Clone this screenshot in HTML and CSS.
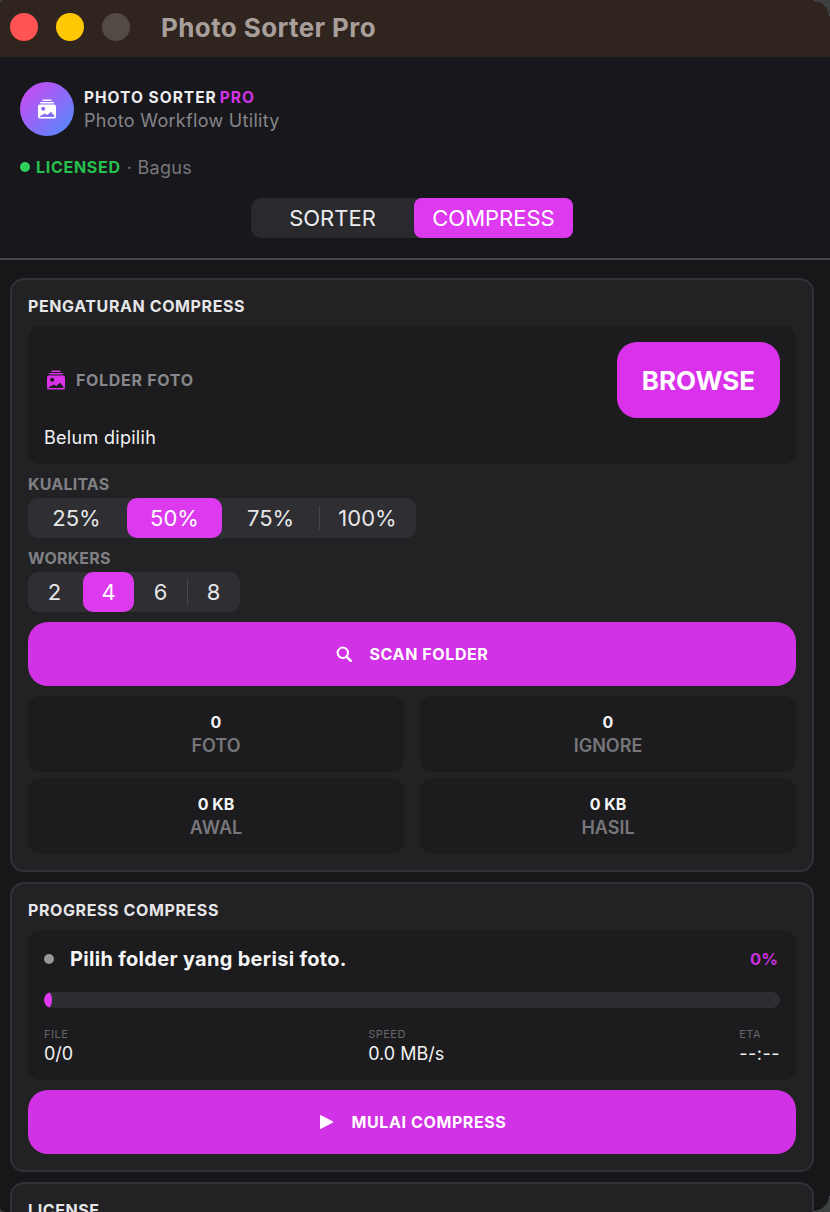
FILE: index.html
```html
<!DOCTYPE html>
<html lang="id">
<head>
    <meta charset="UTF-8">
    <title>Photo Sorter Pro</title>
    <link rel="stylesheet" href="styles.css">
</head>
<body>
<svg class="defs" width="0" height="0">
    <symbol id="album" viewBox="0 0 20 20">
        <path d="M6 .6h8a.7.7 0 0 1 0 1.4H6A.7.7 0 0 1 6 .6zM3.800 3h12.400a.8.8 0 0 1 0 1.600H3.800a.8.8 0 0 1 0-1.600z"/>
        <path fill-rule="evenodd" d="M3 5.400h14A2 2 0 0 1 19 7.400v10A2.200 2.200 0 0 1 16.800 19.600H3.200A2.200 2.200 0 0 1 1 17.400v-10A2 2 0 0 1 3 5.400zM6.200 7.800a2 2 0 1 0 0 4 2 2 0 0 0 0-4zM2.600 17.200c.1.500.4.800.9.800h13c.5 0 .9-.3.9-.8v-.7l-3.500-3.700-3.600 3.200-2.400-1.400z"/>
    </symbol>
</svg>
<div class="window">
    <div class="titlebar">
        <span class="light red"></span>
        <span class="light yellow"></span>
        <span class="light off"></span>
        <span class="window-title">Photo Sorter Pro</span>
    </div>

    <header class="top">
        <div class="brand">
            <div class="logo"><svg class="logo-icon"><use href="#album"/></svg></div>
            <div class="brand-text">
                <div class="brand-name">PHOTO SORTER<span class="pro">PRO</span></div>
                <div class="brand-sub">Photo Workflow Utility</div>
            </div>
        </div>
        <div class="license-line">
            <span class="dot-green"></span>
            <span class="licensed">LICENSED</span>
            <span class="owner">· Bagus</span>
        </div>
        <div class="tabs">
            <div class="tab">SORTER</div>
            <div class="tab active">COMPRESS</div>
        </div>
    </header>

    <main class="content">
        <section class="card">
            <h2>PENGATURAN COMPRESS</h2>
            <div class="folder">
                <div class="folder-row">
                    <svg class="folder-icon"><use href="#album"/></svg>
                    <span class="folder-label">FOLDER FOTO</span>
                    <button class="browse">BROWSE</button>
                </div>
                <div class="folder-path">Belum dipilih</div>
            </div>

            <div class="field-label">KUALITAS</div>
            <div class="segments quality">
                <div class="seg">25%</div>
                <div class="seg active">50%</div>
                <div class="seg sep">75%</div>
                <div class="seg">100%</div>
            </div>

            <div class="field-label">WORKERS</div>
            <div class="segments workers">
                <div class="seg">2</div>
                <div class="seg active">4</div>
                <div class="seg sep">6</div>
                <div class="seg">8</div>
            </div>

            <button class="action scan">
                <svg class="action-icon" viewBox="0 0 16 16"><circle cx="6.800" cy="6.800" r="5.200" fill="none" stroke="#fff" stroke-width="2"/><path d="M10.800 10.800l4 4" stroke="#fff" stroke-width="2.400" stroke-linecap="round"/></svg>
                SCAN FOLDER
            </button>

            <div class="stats">
                <div class="stat"><b>0</b><span>FOTO</span></div>
                <div class="stat"><b>0</b><span>IGNORE</span></div>
                <div class="stat"><b>0 KB</b><span>AWAL</span></div>
                <div class="stat"><b>0 KB</b><span>HASIL</span></div>
            </div>
        </section>

        <section class="card">
            <h2>PROGRESS COMPRESS</h2>
            <div class="progress-box">
                <div class="status">
                    <span class="dot-grey"></span>
                    <span class="status-text">Pilih folder yang berisi foto.</span>
                    <span class="percent">0%</span>
                </div>
                <div class="bar"><div class="bar-fill"></div></div>
                <div class="meta">
                    <div class="meta-col"><small>FILE</small><span>0/0</span></div>
                    <div class="meta-col"><small>SPEED</small><span>0.0 MB/s</span></div>
                    <div class="meta-col eta"><small>ETA</small><span>--:--</span></div>
                </div>
            </div>
            <button class="action start">
                <svg class="action-icon" viewBox="0 0 16 16"><path d="M2.500 1.500v13L15 8z" fill="#fff" stroke="#fff" stroke-linejoin="round"/></svg>
                MULAI COMPRESS
            </button>
        </section>

        <section class="card">
            <h2>LICENSE</h2>
        </section>
    </main>
</div>
</body>
</html>
```

FILE: styles.css
```css
html, body {
    margin: 0;
    padding: 0;
    height: 1212px;
    overflow: hidden;
    background-color: #3c4240;
    font-family: Inter, "Liberation Sans", sans-serif;
}
.defs {
    position: absolute;
}
.window {
    position: relative;
    height: 1212px;
    border-radius: 5px 16px 16px 5px;
    overflow: hidden;
    background-color: #17171a;
}
/* thin edge of the window, only visible round the right corners */
.window::before,
.window::after {
    content: "";
    position: absolute;
    right: 0;
    width: 15px;
    height: 15px;
    border-right: 1px solid #56565a;
}
.window::before {
    top: 0;
    border-top: 1px solid #56565a;
    border-top-right-radius: 16px;
}
.window::after {
    bottom: 0;
    border-bottom: 1px solid #56565a;
    border-bottom-right-radius: 16px;
}

.titlebar {
    height: 57px;
    display: flex;
    align-items: center;
    padding: 0 0 3px 10px;
    box-sizing: border-box;
    background-color: #30241f;
}
.light {
    width: 28px;
    height: 28px;
    border-radius: 50%;
    margin-right: 18px;
}
.red { background-color: #ff5253; }
.yellow { background-color: #fec804; }
.off { background-color: #544a45; }
.window-title {
    margin-left: 13px;
    font-size: 26px;
    font-weight: 700;
    letter-spacing: 0.4px;
    color: #a89f9b;
}

.top {
    height: 203px;
    box-sizing: border-box;
    padding: 25px 26px 0 20px;
    background-color: #18181c;
    border-bottom: 2px solid #46464a;
}
.brand {
    display: flex;
    align-items: center;
    gap: 10px;
}
.logo {
    width: 54px;
    height: 54px;
    border-radius: 50%;
    background: linear-gradient(135deg, #d545f2, #4c8dfd);
    display: flex;
    align-items: center;
    justify-content: center;
}
.logo-icon {
    width: 20px;
    height: 20px;
    fill: #fff;
}
.brand-text {
    margin-top: 4px;
}
.brand-name {
    font-size: 15.500px;
    font-weight: 700;
    letter-spacing: 1px;
    color: #ececee;
    line-height: 20px;
}
.pro {
    color: #d433e8;
    margin-left: 3px;
}
.brand-sub {
    font-size: 18px;
    letter-spacing: 0.3px;
    color: #85858a;
    line-height: 26px;
}
.license-line {
    display: flex;
    align-items: center;
    margin-top: 19px;
    height: 24px;
}
.dot-green {
    width: 10px;
    height: 10px;
    border-radius: 50%;
    background-color: #2fd15a;
    margin-right: 6px;
}
.licensed {
    font-size: 16px;
    font-weight: 700;
    letter-spacing: 0.7px;
    color: #27c04f;
}
.owner {
    margin-left: 6px;
    font-size: 18px;
    letter-spacing: 0.3px;
    color: #77777c;
}
.tabs {
    display: flex;
    width: 322px;
    height: 40px;
    margin: 19px auto 0;
    border-radius: 10px;
    background-color: #2a2a2e;
}
.tab {
    flex: 1;
    display: flex;
    align-items: center;
    justify-content: center;
    border-radius: 8px;
    font-size: 22px;
    color: #ededee;
}
.tab.active {
    flex: none;
    width: 159px;
    background-color: #dd3af0;
    color: #fff;
}

.content {
    padding: 18px 16px 0 10px;
}
.card {
    box-sizing: border-box;
    margin-bottom: 10px;
    padding: 16px;
    border: 2px solid #323236;
    border-radius: 14px;
    background-color: #222225;
}
h2 {
    margin: 0 0 10px;
    font-size: 16px;
    line-height: 20px;
    font-weight: 700;
    letter-spacing: 0.6px;
    color: #e6e6e8;
}
.folder {
    height: 138px;
    box-sizing: border-box;
    padding: 16px 16px 0;
    border-radius: 12px;
    background-color: #1c1c1e;
}
.folder-row {
    display: flex;
    align-items: center;
    height: 76px;
}
.folder-icon {
    width: 20px;
    height: 20px;
    margin: 0 10px 0 2px;
    fill: #d933ea;
}
.folder-label {
    flex: 1;
    font-size: 16px;
    font-weight: 700;
    letter-spacing: 0.7px;
    color: #87878b;
}
.browse {
    width: 163px;
    height: 76px;
    border: none;
    border-radius: 20px;
    background-color: #d932ea;
    color: #fff;
    font-family: inherit;
    font-size: 26px;
    font-weight: 700;
}
.folder-path {
    margin-top: 9px;
    font-size: 18px;
    letter-spacing: 0.3px;
    line-height: 22px;
    color: #f2f2f3;
}
.field-label {
    margin: 8px 0 2px;
    font-size: 16px;
    line-height: 24px;
    font-weight: 700;
    letter-spacing: 0.2px;
    color: #808084;
}
.segments {
    display: flex;
    height: 40px;
    border-radius: 10px;
    background-color: #2e2e33;
}
.quality { width: 388px; }
.workers { width: 212px; }
.seg {
    flex: 1;
    display: flex;
    align-items: center;
    justify-content: center;
    border-radius: 10px;
    font-size: 22px;
    color: #e6e6e8;
    position: relative;
}
.seg.active {
    flex: none;
    margin-left: 2px;
    background-color: #dd3af0;
    color: #fff;
}
.quality .active { width: 95px; }
.workers .active { width: 51px; }
.seg.sep::after {
    content: "";
    position: absolute;
    right: -1px;
    top: 8px;
    bottom: 8px;
    width: 1px;
    background-color: #47474c;
}

.action {
    width: 100%;
    height: 64px;
    display: flex;
    align-items: center;
    justify-content: center;
    border: none;
    border-radius: 20px;
    background-color: #d232e6;
    color: #fff;
    font-family: inherit;
    font-size: 16px;
    font-weight: 700;
    letter-spacing: 0.6px;
}
.action-icon {
    width: 16px;
    height: 16px;
    margin-right: 18px;
}
.scan {
    margin-top: 10px;
}
.stats {
    display: grid;
    grid-template-columns: 1fr 1fr;
    gap: 6px 16px;
    margin-top: 10px;
}
.stat {
    height: 76px;
    display: flex;
    flex-direction: column;
    align-items: center;
    justify-content: center;
    border-radius: 12px;
    background-color: #1c1c1e;
}
.stat b {
    font-size: 16px;
    line-height: 22px;
    color: #f4f4f5;
}
.stat span {
    margin-top: 1px;
    font-size: 18px;
    line-height: 24px;
    font-weight: 600;
    color: #77777b;
}

.progress-box {
    height: 150px;
    box-sizing: border-box;
    padding: 16px;
    border-radius: 12px;
    background-color: #1c1c1e;
}
.status {
    display: flex;
    align-items: center;
    height: 26px;
}
.dot-grey {
    width: 10px;
    height: 10px;
    border-radius: 50%;
    background-color: #98989b;
    margin-right: 16px;
}
.status-text {
    flex: 1;
    font-size: 20px;
    font-weight: 700;
    letter-spacing: 0.3px;
    color: #f6f6f7;
}
.percent {
    margin-right: 2px;
    font-size: 16.500px;
    font-weight: 700;
    color: #c730dc;
}
.bar {
    height: 16px;
    margin-top: 20px;
    border-radius: 8px;
    background-color: #2e2e32;
    overflow: hidden;
}
.bar-fill {
    width: 8px;
    height: 100%;
    border-radius: 50%;
    background-color: #dd3af0;
}
.meta {
    display: flex;
    justify-content: space-between;
    margin-top: 18px;
}
.meta-col {
    display: flex;
    flex-direction: column;
}
.meta-col small {
    font-size: 11px;
    line-height: 16px;
    letter-spacing: 0.5px;
    color: #66666a;
}
.meta-col span {
    font-size: 18px;
    line-height: 24px;
    color: #f2f2f3;
}
.eta span {
    letter-spacing: 0.5px;
}
.start {
    margin-top: 10px;
}
```
